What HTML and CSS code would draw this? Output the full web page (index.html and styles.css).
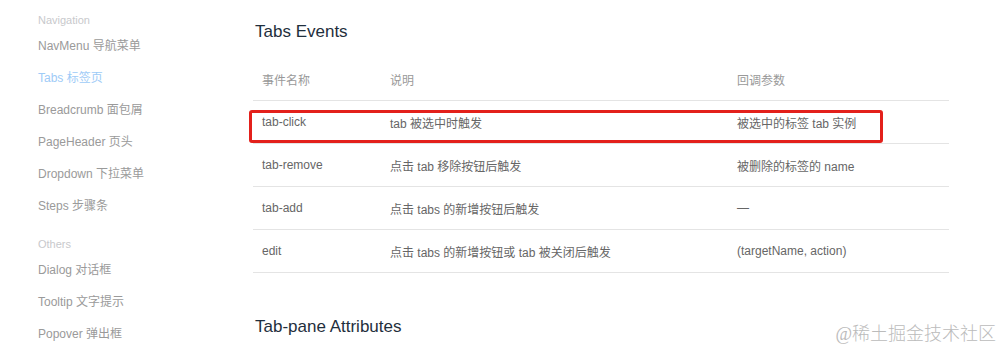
FILE: index.html
```html
<!DOCTYPE html>
<html lang="zh-CN">
<head>
  <meta charset="UTF-8">
  <meta name="viewport" content="width=device-width, initial-scale=1.0">
  <title>Tabs 标签页</title>
  <link rel="stylesheet" href="styles.css">
</head>
<body>
  <div class="page">
    <nav class="side-nav">
      <div class="group-title">Navigation</div>
      <a class="nav-item">NavMenu 导航菜单</a>
      <a class="nav-item active">Tabs 标签页</a>
      <a class="nav-item">Breadcrumb 面包屑</a>
      <a class="nav-item">PageHeader 页头</a>
      <a class="nav-item">Dropdown 下拉菜单</a>
      <a class="nav-item">Steps 步骤条</a>
      <div class="group-title others">Others</div>
      <a class="nav-item">Dialog 对话框</a>
      <a class="nav-item">Tooltip 文字提示</a>
      <a class="nav-item">Popover 弹出框</a>
    </nav>

    <main class="content">
      <h3>Tabs Events</h3>
      <div class="table-wrap">
        <table class="api-table">
          <colgroup>
            <col class="col-name">
            <col class="col-desc">
            <col>
          </colgroup>
          <thead>
            <tr>
              <th>事件名称</th>
              <th>说明</th>
              <th>回调参数</th>
            </tr>
          </thead>
          <tbody>
            <tr>
              <td>tab-click</td>
              <td>tab 被选中时触发</td>
              <td>被选中的标签 tab 实例</td>
            </tr>
            <tr>
              <td>tab-remove</td>
              <td>点击 tab 移除按钮后触发</td>
              <td>被删除的标签的 name</td>
            </tr>
            <tr>
              <td>tab-add</td>
              <td>点击 tabs 的新增按钮后触发</td>
              <td>—</td>
            </tr>
            <tr>
              <td>edit</td>
              <td>点击 tabs 的新增按钮或 tab 被关闭后触发</td>
              <td>(targetName, action)</td>
            </tr>
          </tbody>
        </table>
        <!-- highlight around the tab-click row -->
        <div class="highlight"></div>
      </div>

      <h3 class="next-title">Tab-pane Attributes</h3>
    </main>
  </div>

  <div class="watermark">@稀土掘金技术社区</div>
</body>
</html>
```

FILE: styles.css
```css
body {
  margin: 0;
  padding: 0;
  background: #ffffff;
  font-family: "Liberation Sans", Arial, "Noto Sans CJK SC", sans-serif;
  overflow: hidden;
}

.page {
  display: flex;
  height: 352px;
}

.side-nav {
  width: 253px;
  flex-shrink: 0;
  padding: 10px 0 0 38px;
  box-sizing: border-box;
}

.group-title {
  font-size: 11px;
  line-height: 20px;
  color: #c8c9cc;
}

.group-title.others {
  margin-top: 12px;
}

.nav-item {
  display: block;
  font-size: 12px;
  line-height: 32px;
  color: #9a9a9a;
  cursor: pointer;
}

.nav-item.active {
  color: #9ecbf7;
}

.content {
  width: 696px;
}

h3 {
  margin: 20px 0 14px 2px;
  font-size: 17px;
  font-weight: normal;
  line-height: 24px;
  color: #1f2f3d;
}

.next-title {
  margin-top: 42px;
}

.table-wrap {
  position: relative;
}

.api-table {
  width: 100%;
  border-collapse: collapse;
  table-layout: fixed;
  font-size: 12px;
}

.col-name {
  width: 128px;
}

.col-desc {
  width: 347px;
}

.api-table th,
.api-table td {
  height: 42px;
  padding: 0 9px;
  text-align: left;
  border-bottom: 1px solid #e4e4e4;
}

.api-table th {
  font-weight: normal;
  color: #999999;
}

.api-table td {
  color: #666666;
}

.highlight {
  position: absolute;
  left: -4px;
  top: 52px;
  width: 634px;
  height: 33px;
  border: 3px solid #e3201b;
  border-radius: 3px;
  box-sizing: border-box;
}

.watermark {
  position: absolute;
  right: 7px;
  top: 322px;
  font-family: "Liberation Serif", "Noto Sans CJK SC", serif;
  font-size: 18px;
  font-weight: 300;
  line-height: 24px;
  color: #bbbbbb;
}
```
